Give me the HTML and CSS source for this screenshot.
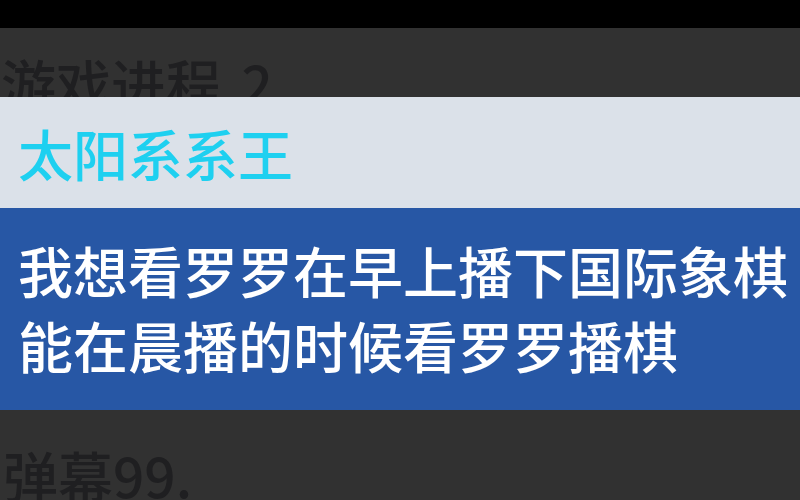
FILE: index.html
```html
<!DOCTYPE html>
<html lang="zh-CN">
<head>
<meta charset="utf-8">
<link rel="stylesheet" href="styles.css">
</head>
<body>
<div class="topbar"></div>
<div class="prev-item"><div class="faded-text title-text">游戏进程 2</div></div>
<div class="name-band"><span class="name">太阳系系王</span></div>
<div class="message-band">
  <div class="msg-line">我想看罗罗在早上播下国际象棋</div>
  <div class="msg-line">能在晨播的时候看罗罗播棋</div>
</div>
<div class="next-item"><div class="faded-text">弹幕99.</div></div>
</body>
</html>
```
FILE: styles.css
```css
html, body {
  margin: 0;
  padding: 0;
  width: 800px;
  height: 500px;
  overflow: hidden;
  background: #313131;
  font-family: "Noto Sans CJK SC", "Noto Sans", sans-serif;
}
.topbar {
  height: 28px;
  background: #000;
}
.prev-item {
  height: 69px;
  overflow: hidden;
  padding-left: 1px;
  box-sizing: border-box;
  padding-top: 17px;
}
.faded-text {
  font-size: 55px;
  line-height: 75px;
  color: #1f1f21;
  white-space: nowrap;
  font-weight: 500;
}
.title-text {
  word-spacing: 8px;
}
.name-band {
  height: 111px;
  background: #dbe1e9;
  display: flex;
  align-items: center;
  padding-left: 18px;
}
.name {
  font-size: 55px;
  line-height: 55px;
  color: #1ed0f0;
  font-weight: 500;
}
.message-band {
  background: #2757a5;
  padding: 24px 0 28px 18px;
  height: 202px;
  box-sizing: border-box;
}
.msg-line {
  font-size: 55px;
  line-height: 75px;
  color: #ffffff;
  white-space: nowrap;
  font-weight: 500;
}
.next-item {
  padding-top: 27px;
  padding-left: 3px;
}
```
